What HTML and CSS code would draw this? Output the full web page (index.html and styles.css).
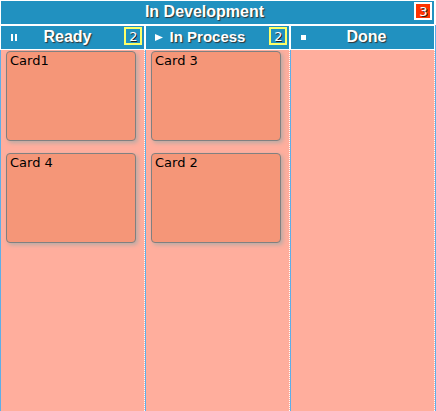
FILE: index.html
```html
<!DOCTYPE html>
<html lang="en">
<head>
<meta charset="utf-8">
<title>In Development</title>
<link rel="stylesheet" href="styles.css">
</head>
<body>
<main class="board">
  <header class="bar">
    <h1 class="title">In Development</h1>
    <span class="limit limit-over">3</span>
  </header>
  <div class="lanes">
    <section class="lane">
      <header class="bar">
        <svg class="state" viewBox="0 0 9 9" aria-hidden="true"><path d="M1 1h2v7H1zM5 1h2v7H5z"/></svg>
        <h2 class="title">Ready</h2>
        <span class="limit">2</span>
      </header>
      <div class="cards">
        <article class="card">Card1</article>
        <article class="card">Card 4</article>
      </div>
    </section>
    <section class="lane">
      <header class="bar">
        <svg class="state" viewBox="0 0 9 9" aria-hidden="true"><path d="M0 1L8 4.500L0 8z"/></svg>
        <h2 class="title title-small">In Process</h2>
        <span class="limit">2</span>
      </header>
      <div class="cards">
        <article class="card">Card 3</article>
        <article class="card">Card 2</article>
      </div>
    </section>
    <section class="lane">
      <header class="bar">
        <svg class="state" viewBox="0 0 9 9" aria-hidden="true"><path d="M1 2h5v5H1z"/></svg>
        <h2 class="title">Done</h2>
      </header>
      <div class="cards"></div>
    </section>
  </div>
</main>
</body>
</html>
```
FILE: styles.css
```css
* {
  box-sizing: border-box;
}

body {
  margin: 0;
  background: #fff;
  font-family: Verdana, "DejaVu Sans", sans-serif;
  font-size: 13px;
  color: #000;
}

.board {
  display: flex;
  flex-direction: column;
  min-height: 100vh;
}

.bar {
  position: relative;
  display: flex;
  align-items: flex-start;
  justify-content: center;
  height: 25px;
  border: 1px solid #fff;
  background: #2191c0;
  color: #fff;
}

.title {
  margin: 0;
  font: bold 16px/21px "Liberation Sans", Arial, sans-serif;
  text-shadow: 1px 1px 1px #333;
}

.lanes .title {
  margin-right: 10px;
}

.board > .bar {
  margin-right: 1px;
  padding-right: 26px;
}

.lane:last-child .title {
  margin-right: 0;
  margin-left: 8px;
}

.lanes .title-small {
  margin-right: 20px;
  font-size: 15px;
}

.state {
  position: absolute;
  top: 7px;
  left: 9px;
  width: 9px;
  height: 9px;
  fill: #fff;
}

.limit {
  position: absolute;
  top: 1px;
  right: 2px;
  width: 18px;
  height: 18px;
  padding-left: 1px;
  border: 2px solid #ffff66;
  font-size: 13px;
  line-height: 15px;
  text-align: center;
  text-shadow: 1px 1px 0 #222;
}

.limit-over {
  border-color: #fff;
  background: #ff3300;
}

.lanes {
  display: grid;
  grid-template-columns: repeat(3, 1fr);
  flex: 1;
  border-right: 1px solid #5eaee8;
}

.lane {
  display: flex;
  flex-direction: column;
}

.cards {
  display: flex;
  flex: 1;
  flex-direction: column;
  gap: 12px;
  padding: 1px 8px 12px 5px;
  border-left: 1px solid #5eaee8;
  border-right: 1px dotted #fff;
  background: #ffae9d;
}

.card {
  height: 90px;
  padding: 1px 3px;
  border: 1px solid #808080;
  border-radius: 4px;
  background: #f59678;
  box-shadow: 2px 2px 4px #b8aaa5;
  line-height: 16px;
}
```
